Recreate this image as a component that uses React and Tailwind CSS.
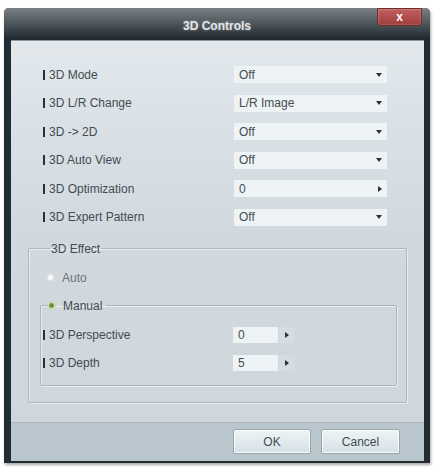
import React from 'react';

const font = { fontFamily: '"Liberation Sans", Arial, sans-serif' };

const rows = [
  { label: '3D Mode', value: 'Off', kind: 'select' },
  { label: '3D L/R Change', value: 'L/R Image', kind: 'select' },
  { label: '3D -> 2D', value: 'Off', kind: 'select' },
  { label: '3D Auto View', value: 'Off', kind: 'select' },
  { label: '3D Optimization', value: '0', kind: 'spin' },
  { label: '3D Expert Pattern', value: 'Off', kind: 'select' },
];

function Label({ text, width }) {
  return (
    <div className={`flex items-center gap-[4px] text-[12px] text-[#454b50] ${width}`}>
      <span className="w-[2px] h-[10px] bg-[#2b3136]" />
      <span>{text}</span>
    </div>
  );
}

function Field({ value, kind }) {
  return (
    <div className="w-[153px] h-[17px] bg-[#eef3f6] flex items-center justify-between pl-[5px] pr-[5px] text-[12px] text-[#454b50]">
      <span>{value}</span>
      {kind === 'select' ? (
        <span className="w-0 h-0 border-l-[3.5px] border-r-[3.5px] border-t-[4px] border-l-transparent border-r-transparent border-t-[#2b3136]" />
      ) : (
        <span className="w-0 h-0 border-t-[3.5px] border-b-[3.5px] border-l-[4px] border-t-transparent border-b-transparent border-l-[#2b3136]" />
      )}
    </div>
  );
}

function Spin({ value }) {
  return (
    <div className="flex items-center">
      <div className="w-[45px] h-[16px] bg-[#eef3f6] flex items-center pl-[5px] text-[12px] text-[#454b50]">{value}</div>
      <div className="w-[16px] h-[16px] flex items-center justify-center ml-[1px] bg-[#d6dde2]">
        <span className="w-0 h-0 border-t-[3px] border-b-[3px] border-l-[4px] border-t-transparent border-b-transparent border-l-[#2b3136]" />
      </div>
    </div>
  );
}

export default function App() {
  return (
    <div className="bg-white w-[434px] h-[467px] pt-[8px] pl-[4px]" style={font}>
      <div className="w-[426px] h-[455px] bg-[#222d33] rounded-t-[5px] flex flex-col px-[6px] pb-[2px] shadow-[1px_2px_3px_rgba(0,0,0,0.35)]">
        {/* Title bar */}
        <div className="h-[32px] -mx-[6px] rounded-t-[5px] bg-gradient-to-b from-[#7a8286] via-[#4c555a] to-[#1c262c] grid grid-cols-[1fr_auto_1fr] items-start">
          <div />
          <div className="pt-[9px] text-[12px] font-bold text-[#e4e6e7] [text-shadow:0_0_3px_rgba(255,255,255,0.35)]">3D Controls</div>
          <div className="flex justify-end pr-[8px]">
            <div className="w-[45px] h-[18px] bg-gradient-to-b from-[#c2605f] to-[#9c3d3c] border border-[#6e2d2d] rounded-b-[4px] flex items-center justify-center text-white font-bold text-[12px] shadow-[inset_0_0_2px_rgba(255,255,255,0.5)]">
              x
            </div>
          </div>
        </div>

        {/* Content */}
        <div className="ml-[1px] h-[382px] bg-gradient-to-b from-[#e2e8ec] via-[#d1d9df] to-[#cfd7dd] border-t border-[#8e989e] flex flex-col">
          <div className="pt-[25px] pl-[32px] flex flex-col gap-[11.6px]">
            {rows.map((r) => (
              <div key={r.label} className="flex items-center h-[17px]">
                <Label text={r.label} width="w-[191px]" />
                <Field value={r.value} kind={r.kind} />
              </div>
            ))}
          </div>

          <fieldset className="mx-[17px] mt-[16px] border border-[#aab5bd] rounded-[2px] pl-[18px] pr-[9px] pb-[16px] shadow-[inset_1px_1px_0_#e8eef1,1px_1px_0_#e8eef1]">
            <legend className="ml-[3px] px-[1px] text-[12px] leading-[14px] text-[#454b50]">3D Effect</legend>
            <div className="mt-[15px] h-[14px] flex items-center gap-[8px] text-[12px] text-[#6d747a]">
              <span className="w-[7px] h-[7px] rounded-full bg-[#f7f9fa] border border-[#e2e7ea]" />
              <span>Auto</span>
            </div>

            <fieldset className="-ml-[7px] mt-[14px] border border-[#aab5bd] rounded-[2px] pl-[2px] pb-[14px] shadow-[inset_1px_1px_0_#e8eef1,1px_1px_0_#e8eef1]">
              <legend className="ml-[5px] pr-[4px] h-[14px] flex items-center gap-[8px] text-[12px] text-[#454b50]">
                <span className="w-[7px] h-[7px] rounded-full bg-[#6f8c3c] border border-[#e7efd5] shadow-[0_0_0_1px_#c9d5b0]" />
                <span>Manual</span>
              </legend>
              <div className="mt-[14px] flex flex-col gap-[12px]">
                <div className="flex items-center h-[16px]">
                  <Label text="3D Perspective" width="w-[190px]" />
                  <Spin value="0" />
                </div>
                <div className="flex items-center h-[16px]">
                  <Label text="3D Depth" width="w-[190px]" />
                  <Spin value="5" />
                </div>
              </div>
            </fieldset>
          </fieldset>
        </div>

        {/* Bottom bar */}
        <div className="ml-[1px] flex-1 bg-[#b9c6cd] border-t border-[#aab6bd] flex justify-end items-start pt-[6px] pr-[24px] gap-[10px]">
          <button className="w-[78px] h-[25px] bg-gradient-to-b from-[#eef4f6] to-[#d5e1e6] border border-[#98a6ad] rounded-[2px] text-[12px] text-[#454b50] shadow-[inset_0_0_0_1px_#f6fafb]">OK</button>
          <button className="w-[79px] h-[25px] bg-gradient-to-b from-[#eef4f6] to-[#d5e1e6] border border-[#98a6ad] rounded-[2px] text-[12px] text-[#454b50] shadow-[inset_0_0_0_1px_#f6fafb]">Cancel</button>
        </div>
      </div>
    </div>
  );
}
